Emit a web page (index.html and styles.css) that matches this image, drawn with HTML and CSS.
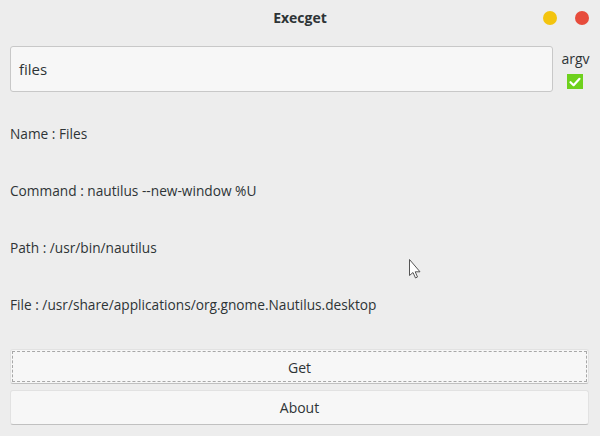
FILE: index.html
```html
<!DOCTYPE html>
<html>
<head>
<meta charset="utf-8">
<link rel="stylesheet" href="styles.css">
</head>
<body>
<div class="window">
  <header class="titlebar">
    <span class="title">Execget</span>
    <div class="controls">
      <span class="dot dot-min"></span>
      <span class="dot dot-close"></span>
    </div>
  </header>
  <main class="content">
    <div class="input-row">
      <div class="entry">files</div>
      <div class="argv">
        <span class="argv-label">argv</span>
        <span class="check">
          <svg width="16" height="16" viewBox="0 0 16 16"><path d="M3.5 8.2 L6.6 11.2 L12.5 4.8" fill="none" stroke="#fff" stroke-width="2.2" stroke-linecap="round" stroke-linejoin="round"/></svg>
        </span>
      </div>
    </div>
    <div class="info">
      <p class="line">Name : Files</p>
      <p class="line">Command : nautilus --new-window %U</p>
      <p class="line">Path : /usr/bin/nautilus</p>
      <p class="line">File : /usr/share/applications/org.gnome.Nautilus.desktop</p>
    </div>
    <div class="buttons">
      <button class="btn btn-focus"><span class="btn-inner">Get</span></button>
      <button class="btn"><span class="btn-inner">About</span></button>
    </div>
  </main>
  <svg class="cursor" width="16" height="24" viewBox="0 0 16 24"><path d="M1.5 1.5 L1.5 17.5 L5 14.5 L7.5 20 L9.5 19 L7.2 13.8 L12 13.8 Z" fill="#fff" stroke="#555" stroke-width="1" stroke-linejoin="round"/></svg>
</div>
</body>
</html>
```
FILE: styles.css
```css
* { box-sizing: border-box; }
html, body { margin: 0; padding: 0; }
body {
  width: 600px;
  height: 436px;
  background: #ededed;
  font-family: "Open Sans", "Noto Sans", sans-serif;
  color: #2e3436;
  overflow: hidden;
}
.window {
  position: relative;
  width: 600px;
  height: 436px;
  display: flex;
  flex-direction: column;
}
.titlebar {
  height: 36px;
  display: flex;
  align-items: center;
  justify-content: center;
  position: relative;
}
.title {
  font-weight: bold;
  font-size: 14px;
  color: #2e3436;
  margin-top: -1px;
}
.controls {
  position: absolute;
  right: 11px;
  top: 11px;
  display: flex;
  gap: 18px;
}
.dot {
  width: 14px;
  height: 14px;
  border-radius: 50%;
  display: block;
}
.dot-min { background: #f3c40f; }
.dot-close { background: #e74c3c; }
.content {
  flex: 1;
  display: flex;
  flex-direction: column;
  padding: 10px 10px 11px 10px;
}
.input-row {
  display: flex;
  align-items: flex-start;
}
.entry {
  flex: 1;
  height: 46px;
  border: 1px solid #c8c8c8;
  border-radius: 3px;
  background: #f7f7f7;
  font-size: 15px;
  line-height: 44px;
  padding-left: 8px;
  color: #2e3436;
}
.argv {
  width: 37px;
  display: flex;
  flex-direction: column;
  align-items: center;
  padding-top: 3px;
  padding-left: 8px;
}
.argv-label {
  font-size: 14px;
  line-height: 19px;
}
.check {
  margin-top: 6px;
  margin-left: -2px;
  width: 16px;
  height: 15px;
  background: #6ed11d;
  display: flex;
  align-items: center;
  justify-content: center;
}
.info {
  display: flex;
  flex-direction: column;
  gap: 37px;
  margin-top: 32px;
}
.line {
  margin: 0;
  font-size: 13.7px;
  line-height: 20px;
}
.buttons {
  margin-top: auto;
  margin-right: 1px;
  display: flex;
  flex-direction: column;
  gap: 6px;
}
.btn {
  height: 35px;
  width: 100%;
  border: 1px solid #e2e2e2;
  border-bottom-color: #c0c0c0;
  border-radius: 3px;
  background: #f7f7f7;
  font-family: inherit;
  font-size: 14px;
  color: #2e3436;
  padding: 1px;
  display: flex;
}
.btn-inner {
  flex: 1;
  display: flex;
  align-items: center;
  justify-content: center;
  border: 1px dashed transparent;
}
.btn-focus .btn-inner {
  border-color: #a8a8a8;
  padding-top: 1px;
}
.cursor {
  position: absolute;
  left: 408px;
  top: 258px;
}
```
